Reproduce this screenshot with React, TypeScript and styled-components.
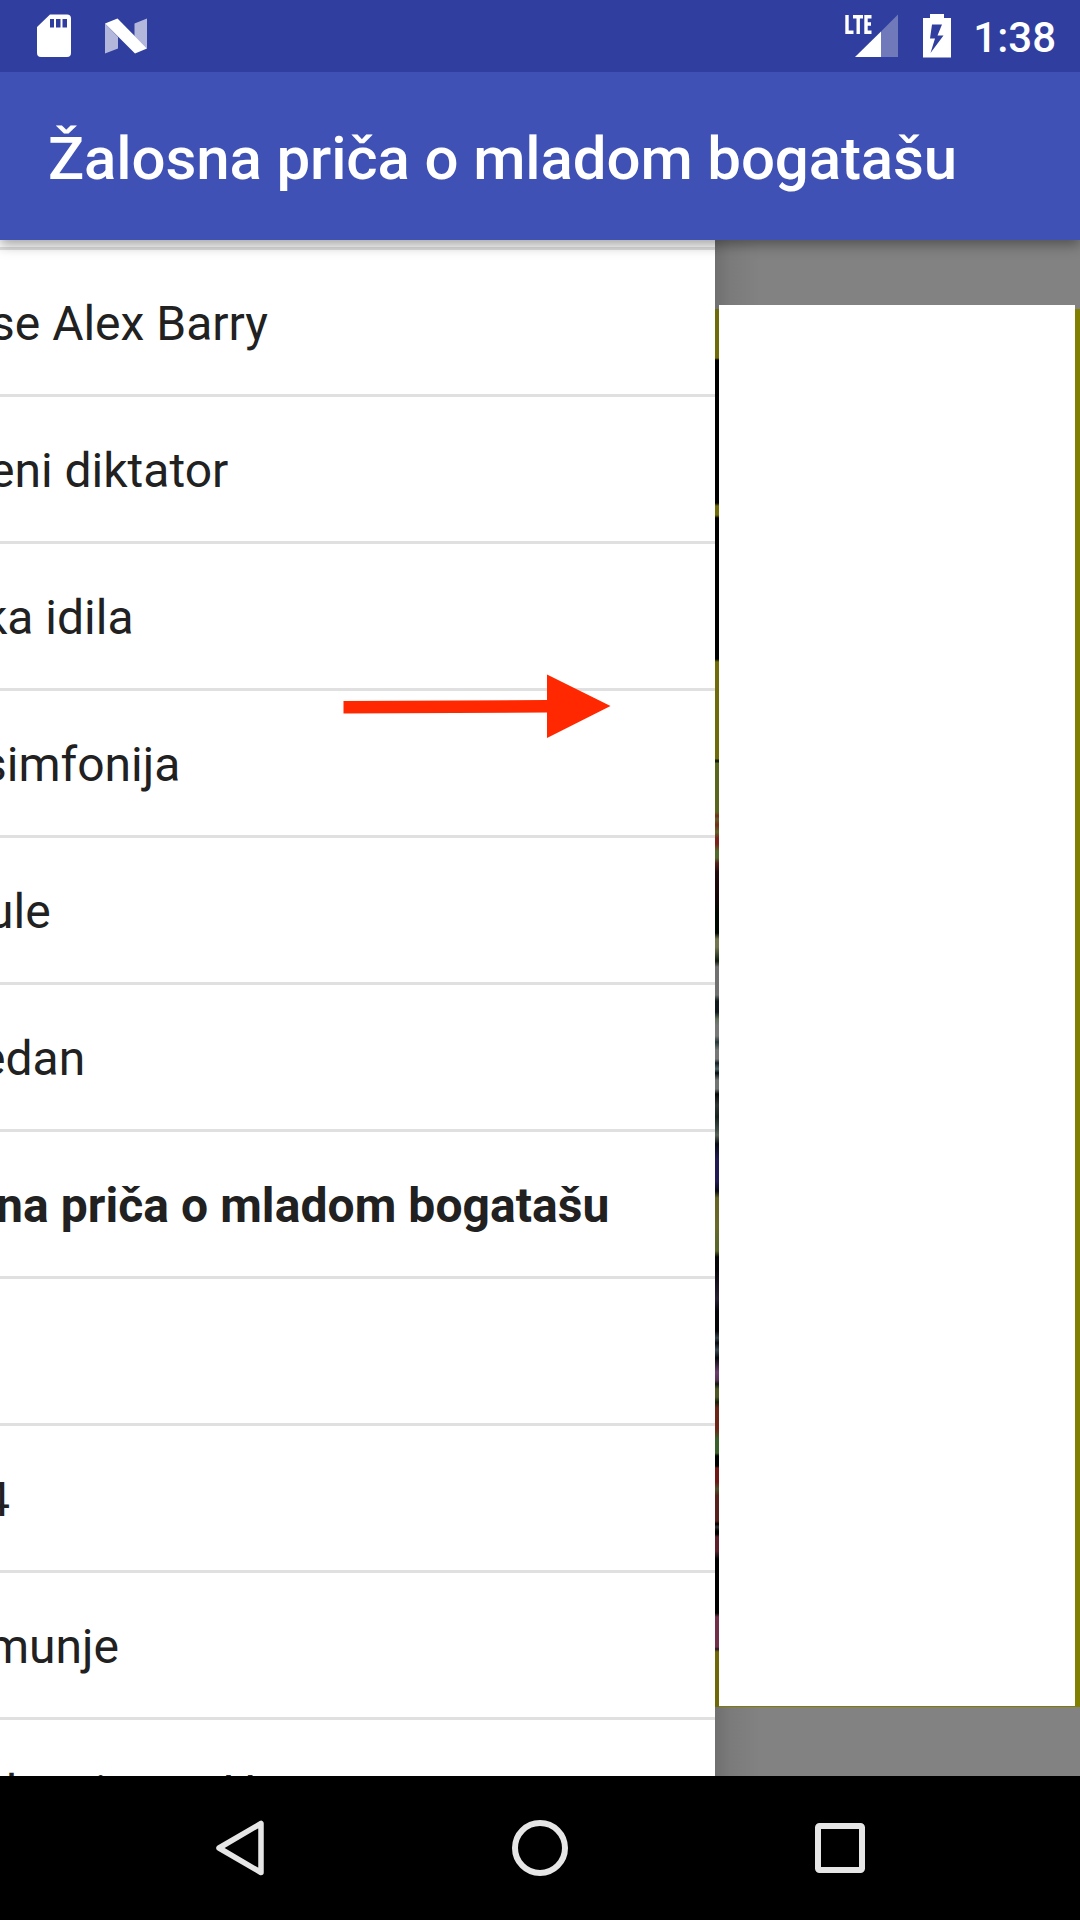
import React from 'react';
import styled, { createGlobalStyle } from 'styled-components';

const Global = createGlobalStyle`
  * { box-sizing: border-box; }
  body { margin: 0; overflow: hidden; font-family: Roboto, sans-serif; }
`;

const Screen = styled.div`
  width: 1080px;
  height: 1920px;
  display: flex;
  flex-direction: column;
  overflow: hidden;
  background: #000;
`;

const StatusBar = styled.header`
  height: 72px;
  flex: none;
  padding: 0 24px 0 36px;
  display: flex;
  align-items: center;
  justify-content: space-between;
  background: #303f9f;
  position: relative;
  z-index: 2;
`;

const StatusGroup = styled.div`
  display: flex;
  align-items: center;
  height: 72px;
`;

const Clock = styled.span`
  margin-left: -1px;
  color: #fff;
  font-size: 42px;
  font-weight: 500;
  line-height: 72px;
  padding-top: 3px;
`;

const AppBar = styled.div`
  height: 168px;
  flex: none;
  padding: 5px 48px 0;
  display: flex;
  align-items: center;
  background: #3f51b5;
  box-shadow: 0 5px 12px rgba(0, 0, 0, 0.36);
  position: relative;
  z-index: 1;
`;

const Title = styled.h1`
  margin: 0;
  color: #fff;
  font-size: 60px;
  font-weight: 500;
  line-height: 70px;
  letter-spacing: -0.12px;
  white-space: nowrap;
`;

const Content = styled.main`
  flex: 1;
  min-height: 0;
  display: flex;
  position: relative;
  overflow: hidden;
`;

const Drawer = styled.ul`
  width: 715px;
  flex: none;
  margin: 0;
  padding: 7px 0 0;
  list-style: none;
  overflow: hidden;
  background: #fff;
`;

const Row = styled.li<{ $bold?: boolean }>`
  height: 147px;
  border-top: 3px solid #e0e0e0;
  padding-top: 4px;
  display: flex;
  align-items: center;
  color: #212121;
  font-size: 48px;
  font-weight: ${(p) => (p.$bold ? 700 : 400)};
  letter-spacing: ${(p) => (p.$bold ? '0.07px' : 'normal')};
  line-height: 56px;
  white-space: pre;

  &:last-child {
    padding-top: 2px;
  }
`;

const Label = styled.span<{ $shift: number }>`
  margin-left: ${(p) => p.$shift}px;
`;

const Reader = styled.section`
  flex: 1;
  display: flex;
  flex-direction: column;
  justify-content: space-between;
  padding: 65px 0 69px;
  background: linear-gradient(90deg, #6f6f6f 0, #7b7b7b 16px, #828282 45px);
`;

const Pages = styled.div`
  height: 1402px;
  display: flex;
`;

const PageEdge = styled.div`
  width: 4px;
  margin-top: 4px;
  background: linear-gradient(
    180deg,
    #6e6b08 0 49px, #000 51px 194px, #6e6b08 197px 206px, #000 209px 350px,
    #6e6b08 353px 450px, #15200a 451px 453px, #59671d 454px 503px,
    #762c18 507px, #665b26 510px, #752f17 516px, #5f6426 523px, #79221a 529px 535px,
    #53682b 542px 549px, #542019 554px, #210b0b 563px, #130606 590px, #000900 604px 624px,
    #737550 630px 638px, #3f4b30 645px, #111a0d 652px, #707070 658px 686px,
    #10191b 692px 703px, #60705a 710px, #777 716px 727px, #263638 733px, #777 741px 750px,
    #152229 754px, #526568 760px, #050e13 764px, #707572 771px 780px, #050808 785px,
    #303634 796px, #17221d 808px, #3f4e46 821px, #576256 826px, #090d14 835px,
    #211b54 850px 872px, #080b12 882px, #656523 889px, #696a27 917px, #59672a 935px,
    #59672a 942px, #050706 948px, #070508 960px, #272032 990px, #050509 1002px 1022px,
    #34434b 1029px, #080b0e 1034px, #3b4853 1041px, #08080d 1049px, #683f6b 1063px,
    #593356 1071px, #111812 1075px, #4c5724 1080px 1088px, #172109 1093px,
    #6c2514 1099px 1120px, #396029 1130px 1144px, #000 1147px 1157px,
    #6f1715 1159px 1173px, #4c512b 1180px, #57201a 1187px 1212px, #000 1215px,
    #333 1218px, #000 1222px 1225px, #5b2029 1228px 1242px, #28151e 1246px,
    #000 1250px 1304px, #702f47 1308px 1338px, #2b1423 1340px, #6e6906 1343px 1398px
  );
`;

const Page = styled.div`
  flex: 1;
  background: #fff;
  border-bottom: 1px solid #807c00;
`;

const NextPage = styled.div`
  width: 5px;
  margin-top: 4px;
  background: #807f00;
`;

const Arrow = styled.svg`
  position: absolute;
  left: 340px;
  top: 432px;
`;

const NavBar = styled.nav`
  height: 144px;
  flex: none;
  padding: 0 90px;
  display: flex;
  background: #000;
`;

const NavButton = styled.button`
  flex: 1;
  border: 0;
  padding: 0;
  display: flex;
  align-items: center;
  justify-content: center;
  background: none;
`;

const items = [
  { text: 'se Alex Barry', shift: -10 },
  { text: 'eni diktator', shift: -11 },
  { text: 'ka idila', shift: -17 },
  { text: 'simfonija', shift: -18 },
  { text: 'ule', shift: -13 },
  { text: 'edan', shift: -20 },
  { text: 'na priča o mladom bogatašu', shift: -4, bold: true },
  { text: '', shift: 0 },
  { text: '4', shift: -17 },
  { text: 'munje', shift: -13 },
  { text: 'kan i vreo H', shift: 6 },
];

const App = () => (
  <>
    <Global />
    <Screen>
      <StatusBar>
        <StatusGroup>
          <svg width="112" height="72" viewBox="36 0 112 72">
            <path
              fill="#fff"
              fillRule="evenodd"
              d="M50 14.5H67Q71 14.5 71 18.5V53Q71 57 67 57H41Q37 57 37 53V27ZM50 19V27.5H54V19ZM56 19V27.5H60.500V19ZM62.500 19V27.500H67V19Z"
            />
            <path fill="#b3b7dc" d="M105 23.500L118 37V48.500L105 53.500ZM147 18.500L134.500 23.500V36L147 48.500Z" />
            <path fill="#fff" d="M105 23.500L117.500 18.500L147 48.500L135 53.500Z" />
          </svg>
        </StatusGroup>
        <StatusGroup>
          <svg width="131" height="72" viewBox="843 0 131 72">
            <g fill="none" stroke="#fff" strokeWidth="3.4">
              <path d="M847 15V32.300H853.500M853 16.700H863M858.200 16V34M871.500 16.700H866V32.300H871.500M866 24H871" />
            </g>
            <path fill="#707abb" d="M898 14.500V57H881V31.500Z" />
            <path fill="#fff" d="M881 31.500V57H855Z" />
            <path
              fill="#fff"
              fillRule="evenodd"
              d="M930 14H944V18H951V57.500H923V18H930ZM932 24.500L930 38.500H935L930.500 53L943.500 35.500H937.500L942 24.500Z"
            />
          </svg>
          <Clock>1:38</Clock>
        </StatusGroup>
      </StatusBar>
      <AppBar>
        <Title>Žalosna priča o mladom bogatašu</Title>
      </AppBar>
      <Content>
        <Drawer>
          {items.map((item, i) => (
            <Row key={i} $bold={item.bold}>
              <Label $shift={item.shift}>{item.text}</Label>
            </Row>
          ))}
        </Drawer>
        <Reader>
          <Pages>
            <PageEdge />
            <Page />
            <NextPage />
          </Pages>
        </Reader>
        <Arrow width="274" height="70" viewBox="340 672 274 70">
          <path fill="#ff2800" d="M343.500 701L547 700V674.500L610.500 706L547 738V712.500L343.500 713.500Z" />
        </Arrow>
      </Content>
      <NavBar>
        <NavButton aria-label="Back">
          <svg width="60" height="60" viewBox="0 0 60 60">
            <path d="M51 5.500V54.500L9 30Z" fill="none" stroke="#e6e6e6" strokeWidth="5.500" strokeLinejoin="round" />
          </svg>
        </NavButton>
        <NavButton aria-label="Home">
          <svg width="60" height="60" viewBox="0 0 60 60">
            <circle cx="30" cy="30" r="25" fill="none" stroke="#e6e6e6" strokeWidth="6" />
          </svg>
        </NavButton>
        <NavButton aria-label="Recent apps">
          <svg width="60" height="60" viewBox="0 0 60 60">
            <rect x="8" y="8" width="44" height="44" rx="1.500" fill="none" stroke="#e6e6e6" strokeWidth="6" />
          </svg>
        </NavButton>
      </NavBar>
    </Screen>
  </>
);

export default App;
